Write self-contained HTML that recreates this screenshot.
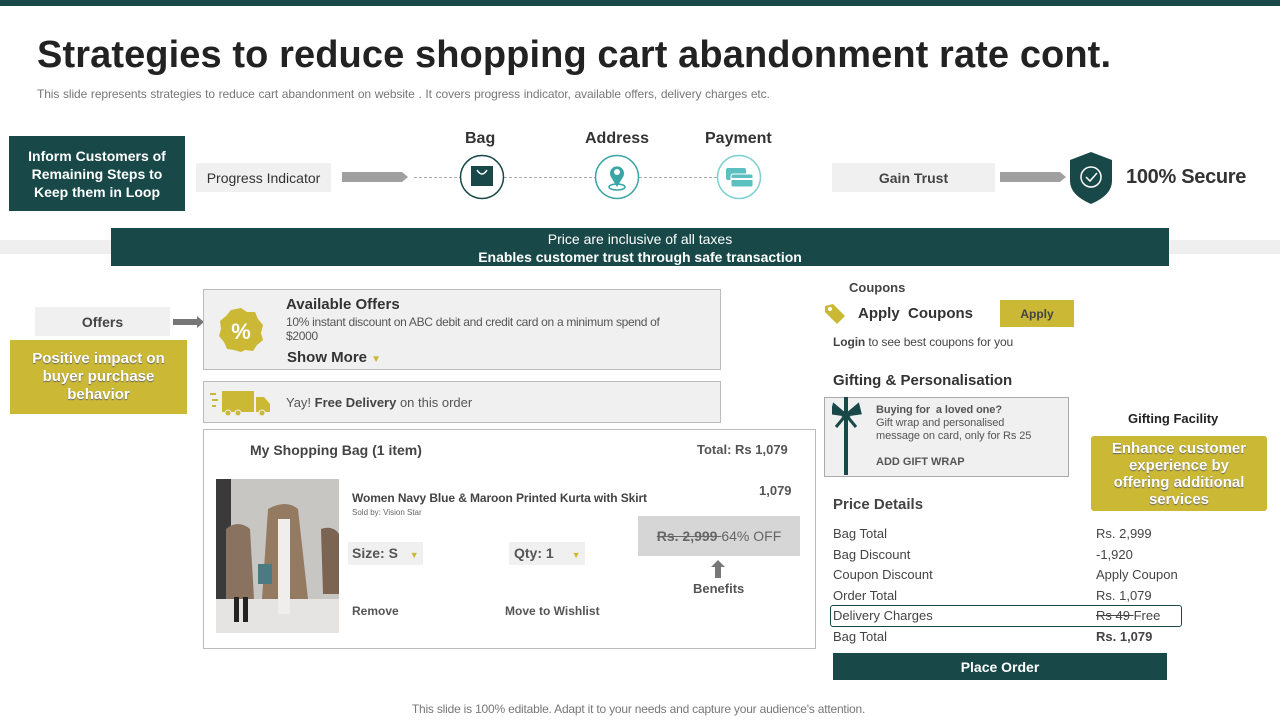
<!DOCTYPE html>
<html><head><meta charset="utf-8"><style>
*{margin:0;padding:0;box-sizing:border-box}
body{width:1280px;height:720px;position:relative;background:#fff;font-family:"Liberation Sans",Arial,sans-serif;color:#333;overflow:hidden}
.a{position:absolute}
.t{background:#184848;color:#fff}
.g{background:#cbb834;color:#fff}
.lg{background:#f0f0f0}
.c{display:flex;align-items:center;justify-content:center;text-align:center}
</style></head><body>
<div class="a t" style="left:0;top:0;width:1280px;height:6px"></div>
<div class="a" style="left:37px;top:34px;font-size:38px;font-weight:bold;color:#222;letter-spacing:0.1px">Strategies to reduce shopping cart abandonment rate cont.</div>
<div class="a" style="left:37px;top:87px;font-size:12px;color:#777;letter-spacing:-0.1px;word-spacing:0.5px">This slide represents strategies to reduce cart abandonment on website . It covers progress indicator, available offers, delivery charges etc.</div>

<div class="a t c" style="left:9px;top:136px;width:176px;height:75px;font-size:14px;font-weight:bold;line-height:18px;padding:0 14px">Inform Customers of Remaining Steps to Keep them in Loop</div>
<div class="a lg c" style="left:196px;top:163px;width:135px;height:29px;font-size:14px;color:#333">Progress Indicator</div>
<svg class="a" style="left:342px;top:171px" width="68" height="12"><polygon points="0,1 60,1 66,6 60,11 0,11" fill="#a0a0a0"/></svg>
<div class="a" style="left:414px;top:177px;width:308px;border-top:1px dashed #aaa"></div>
<div class="a" style="left:465px;top:130px;font-size:16px;font-weight:bold">Bag</div>
<div class="a" style="left:585px;top:130px;font-size:16px;font-weight:bold">Address</div>
<div class="a" style="left:705px;top:130px;font-size:16px;font-weight:bold">Payment</div>
<svg class="a" style="left:459px;top:154px" width="46" height="46"><circle cx="23" cy="23" r="21.5" fill="#fff" stroke="#184848" stroke-width="1.5"/><rect x="12" y="12" width="22" height="20" fill="#184848"/><path d="M18 16 q5 8 10 0" stroke="#fff" fill="none" stroke-width="1.5"/></svg>
<svg class="a" style="left:594px;top:154px" width="46" height="46"><circle cx="23" cy="23" r="21.5" fill="#fff" stroke="#3aa5a5" stroke-width="1.5"/><path d="M23 33 l-6 -10 a7 7 0 1 1 12 0z" fill="#3aa5a5"/><circle cx="23" cy="18" r="3" fill="#fff"/><ellipse cx="23" cy="33" rx="8" ry="3" fill="none" stroke="#3aa5a5" stroke-width="1.5"/></svg>
<svg class="a" style="left:716px;top:154px" width="46" height="46"><circle cx="23" cy="23" r="21.5" fill="#fff" stroke="#7ed0d0" stroke-width="1.5"/><rect x="10" y="14" width="20" height="12" rx="2" fill="#5cc0c0"/><rect x="15" y="20" width="22" height="13" rx="2" fill="#5cc0c0" stroke="#fff"/><rect x="15" y="24" width="22" height="2" fill="#fff"/></svg>

<div class="a lg c" style="left:832px;top:163px;width:163px;height:29px;font-size:14px;font-weight:bold;color:#444">Gain Trust</div>
<svg class="a" style="left:1000px;top:171px" width="68" height="12"><polygon points="0,1 60,1 66,6 60,11 0,11" fill="#a0a0a0"/></svg>
<svg class="a" style="left:1068px;top:151px" width="46" height="54"><path d="M23 1 L44 9 L44 30 Q44 44 23 53 Q2 44 2 30 L2 9Z" fill="#184848"/><circle cx="23" cy="26" r="10" fill="none" stroke="#fff" stroke-width="1.5"/><path d="M18 26 l4 4 l7 -8" fill="none" stroke="#fff" stroke-width="1.5"/></svg>
<div class="a" style="left:1126px;top:166px;font-size:20px;font-weight:bold;color:#333;letter-spacing:-0.3px">100% Secure</div>

<div class="a" style="left:0;top:240px;width:1280px;height:14px;background:#efefef"></div>
<div class="a t" style="left:111px;top:228px;width:1058px;height:38px;text-align:center;font-size:14px;line-height:18px;padding-top:2px"><div>Price are inclusive of all taxes</div><div style="font-weight:bold">Enables customer trust through safe transaction</div></div>

<div class="a lg c" style="left:35px;top:307px;width:135px;height:29px;font-size:14px;font-weight:bold;color:#444">Offers</div>
<svg class="a" style="left:173px;top:316px" width="32" height="12"><polygon points="0,3 24,3 24,0 31,6 24,12 24,9 0,9" fill="#777"/></svg>
<div class="a g c" style="left:10px;top:340px;width:177px;height:74px;font-size:15px;font-weight:bold;line-height:18px;text-shadow:0 1px 1px #666;padding:0 16px">Positive impact on buyer purchase behavior</div>

<div class="a lg" style="left:203px;top:289px;width:518px;height:81px;border:1px solid #bbb"></div>
<svg class="a" style="left:218px;top:307px" width="46" height="46"><polygon points="23,1 29,5 37,5 40,12 45,18 43,26 45,33 39,38 35,44 27,43 23,45 16,43 9,42 6,35 1,29 3,22 2,14 8,9 13,3" fill="#cbb834"/><text x="23" y="32" text-anchor="middle" font-size="22" font-weight="bold" fill="#fff" font-family="Liberation Sans">%</text></svg>
<div class="a" style="left:286px;top:296px;font-size:15px;font-weight:bold">Available Offers</div>
<div class="a" style="left:286px;top:315px;width:400px;font-size:12px;color:#555;line-height:14px;letter-spacing:-0.3px">10% instant discount on ABC debit and credit card on a minimum spend of $2000</div>
<div class="a" style="left:287px;top:349px;font-size:15px;font-weight:bold">Show More <span style="color:#cbb834;font-size:10px">▼</span></div>

<div class="a lg" style="left:203px;top:381px;width:518px;height:42px;border:1px solid #bbb"></div>
<svg class="a" style="left:210px;top:389px" width="64" height="28"><rect x="0" y="4" width="6" height="2" fill="#cbb834"/><rect x="2" y="10" width="6" height="2" fill="#cbb834"/><rect x="2" y="16" width="4" height="2" fill="#cbb834"/><rect x="12" y="2" width="32" height="21" fill="#cbb834"/><path d="M46 8 h8 l6 7 v8 h-14z" fill="#cbb834"/><circle cx="18" cy="24" r="3" fill="#cbb834" stroke="#f0f0f0"/><circle cx="28" cy="24" r="3" fill="#cbb834" stroke="#f0f0f0"/><circle cx="52" cy="24" r="3" fill="#cbb834" stroke="#f0f0f0"/></svg>
<div class="a" style="left:286px;top:395px;font-size:13px;color:#555">Yay! <b style="color:#444">Free Delivery</b> on this order</div>

<div class="a" style="left:203px;top:429px;width:613px;height:220px;border:1px solid #bbb"></div>
<div class="a" style="left:250px;top:442px;font-size:14px;font-weight:bold;color:#444">My Shopping Bag (1 item)</div>
<div class="a" style="left:697px;top:442px;font-size:13px;font-weight:bold;color:#555">Total: Rs 1,079</div>
<svg class="a" style="left:216px;top:479px" width="123" height="154"><rect width="123" height="154" fill="#c8c6c2"/><rect width="15" height="154" fill="#3a3a3a"/><rect x="0" y="120" width="123" height="34" fill="#e6e4e2"/><path d="M10 50 q12 -10 24 0 l4 70 h-28z" fill="#8a7260"/><path d="M52 30 q18 -10 30 0 l10 90 h-46z" fill="#957a62"/><rect x="62" y="40" width="12" height="95" fill="#efeeec"/><path d="M105 50 q12 -4 18 5 v60 h-16z" fill="#7c6452"/><rect x="18" y="118" width="5" height="25" fill="#222"/><rect x="27" y="118" width="5" height="25" fill="#222"/><rect x="42" y="85" width="14" height="20" fill="#4a7b82"/></svg>
<div class="a" style="left:352px;top:491px;font-size:12px;font-weight:bold;color:#444;letter-spacing:-0.1px">Women Navy Blue &amp; Maroon Printed Kurta with Skirt</div>
<div class="a" style="left:352px;top:508px;font-size:8px;color:#666">Sold by: Vision Star</div>
<div class="a" style="left:759px;top:483px;font-size:13px;font-weight:bold;color:#555">1,079</div>
<div class="a c" style="left:638px;top:516px;width:162px;height:40px;background:#d6d6d6;font-size:14px;color:#666"><span><s style="font-weight:bold">Rs. 2,999 </s>64% OFF</span></div>
<div class="a lg" style="left:348px;top:542px;width:75px;height:23px;font-size:14px;font-weight:bold;color:#555;padding:3px 4px;white-space:nowrap">Size: S <span style="color:#cbb834;font-size:9px;margin-left:8px">▼</span></div>
<div class="a lg" style="left:509px;top:542px;width:76px;height:23px;font-size:14px;font-weight:bold;color:#555;padding:3px 5px;white-space:nowrap">Qty: 1 <span style="color:#cbb834;font-size:9px;margin-left:14px">▼</span></div>
<svg class="a" style="left:711px;top:560px" width="14" height="18"><polygon points="7,0 14,7 10,7 10,18 4,18 4,7 0,7" fill="#777"/></svg>
<div class="a" style="left:693px;top:581px;font-size:13px;font-weight:bold;color:#555">Benefits</div>
<div class="a" style="left:352px;top:604px;font-size:12px;font-weight:bold;color:#555">Remove</div>
<div class="a" style="left:505px;top:604px;font-size:12px;font-weight:bold;color:#555">Move to Wishlist</div>

<div class="a" style="left:849px;top:280px;font-size:13px;font-weight:bold;color:#444">Coupons</div>
<svg class="a" style="left:823px;top:302px" width="24" height="24"><path d="M2 4 l8 -2 l12 12 l-8 8 l-12 -12z" fill="#cbb834"/><circle cx="7" cy="7" r="2" fill="#fff"/></svg>
<div class="a" style="left:858px;top:305px;font-size:15px;font-weight:bold;color:#333">Apply&nbsp; Coupons</div>
<div class="a g c" style="left:1000px;top:300px;width:74px;height:27px;font-size:12px;font-weight:bold;color:#444">Apply</div>
<div class="a" style="left:833px;top:335px;font-size:12px;color:#444;letter-spacing:-0.1px"><b>Login</b> to see best coupons for you</div>
<div class="a" style="left:833px;top:372px;font-size:15px;font-weight:bold;color:#333">Gifting &amp; Personalisation</div>
<div class="a lg" style="left:824px;top:397px;width:245px;height:80px;border:1px solid #aaa"></div>
<svg class="a" style="left:832px;top:397px" width="30" height="78"><rect x="12" y="0" width="4" height="78" fill="#184848"/><path d="M14 18 l-12 -10 l-2 8z M14 18 l12 -10 l2 8z M14 18 l-10 12 M14 18 l10 12" stroke="#184848" stroke-width="3" fill="#184848"/></svg>
<div class="a" style="left:876px;top:404px;font-size:11px;color:#555;line-height:13px;letter-spacing:-0.1px"><b>Buying for &nbsp;a loved one?</b><br>Gift wrap and personalised<br>message on card, only for Rs 25</div>
<div class="a" style="left:876px;top:456px;font-size:11px;font-weight:bold;color:#555">ADD GIFT WRAP</div>
<div class="a" style="left:1128px;top:411px;font-size:13px;font-weight:bold;color:#222">Gifting Facility</div>
<div class="a g c" style="left:1091px;top:436px;width:176px;height:75px;border-radius:3px;font-size:15px;font-weight:bold;line-height:17px;text-shadow:0 1px 1px #666;padding:0 14px">Enhance customer experience by offering additional services</div>

<div class="a" style="left:833px;top:496px;font-size:15px;font-weight:bold;color:#444">Price Details</div>
<div class="a" style="left:833px;top:524px;font-size:13px;color:#444;line-height:20.6px">Bag Total<br>Bag Discount<br>Coupon Discount<br>Order Total<br>Delivery Charges<br>Bag Total</div>
<div class="a" style="left:1096px;top:524px;font-size:13px;color:#444;line-height:20.6px">Rs. 2,999<br>-1,920<br>Apply Coupon<br>Rs. 1,079<br><s>Rs 49 </s>Free<br><b>Rs. 1,079</b></div>
<div class="a" style="left:830px;top:605px;width:352px;height:22px;border:1px solid #184848;border-radius:3px"></div>
<div class="a t c" style="left:833px;top:653px;width:334px;height:27px;font-size:14px;font-weight:bold">Place Order</div>

<div class="a" style="left:0;top:702px;width:1277px;text-align:center;font-size:12px;color:#777;letter-spacing:-0.2px">This slide is 100% editable. Adapt it to your needs and capture your audience's attention.</div>
</body></html>
